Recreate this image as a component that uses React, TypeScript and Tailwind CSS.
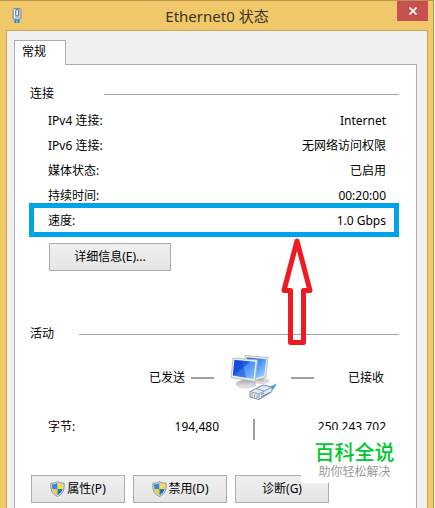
import type { ReactNode } from 'react';

const connectionRows = [
  { label: 'IPv4 连接:', value: 'Internet' },
  { label: 'IPv6 连接:', value: '无网络访问权限' },
  { label: '媒体状态:', value: '已启用' },
  { label: '持续时间:', value: '00:20:00' }
];

const actions = [
  { label: '属性(P)', shield: true },
  { label: '禁用(D)', shield: true },
  { label: '诊断(G)', shield: false }
];

function AdapterIcon() {
  return (
    <svg width="10" height="17" viewBox="0 0 10 17" aria-hidden="true">
      <path d="M2.500 11h5v5h-5z" fill="#1f86c4" />
      <path d="M4.500 11h1v5h-1z" fill="#a8e4fa" />
      <path d="M2 1.500h6l1 1V11l-1 1.500H2L1 11V2.500z" fill="#b9c6da" stroke="#7d8ba5" />
      <path d="M2 2.500h1V11H2z" fill="#eef3fa" />
      <path d="M3.800 2.800h2.700v6H3.800z" fill="#f3f6fa" stroke="#65769a" />
    </svg>
  );
}

function ShieldIcon() {
  return (
    <svg width="15" height="16" viewBox="0 0 15 16" aria-hidden="true">
      <defs>
        <clipPath id="shield">
          <path d="M7.500 2C6 3.200 4 3.500 2.200 3.300 1.800 8 3 12 7.500 14c4.500-2 5.700-6 5.300-10.700C11 3.500 9 3.200 7.500 2z" />
        </clipPath>
      </defs>
      <path
        d="M7.500.5C5.600 2 3.300 2.400 1 2 .3 8 1.500 13 7.500 15.500 13.500 13 14.700 8 14 2 11.700 2.400 9.400 2 7.500.5z"
        fill="#d5d8dc"
        stroke="#8f9499"
      />
      <g clipPath="url(#shield)">
        <path d="M0 0h7.500v8H0z" fill="#2a8ce0" />
        <path d="M7.500 0H15v8H7.500z" fill="#fbdc3c" />
        <path d="M0 8h7.500v8H0z" fill="#f9cf22" />
        <path d="M7.500 8H15v8H7.500z" fill="#1f76d0" />
      </g>
    </svg>
  );
}

function NetworkIcon() {
  return (
    <svg width="48" height="46" viewBox="0 0 48 46" aria-hidden="true">
      <defs>
        <linearGradient id="screen" x1="0" y1="0" x2="1" y2="1">
          <stop offset="0" stopColor="#0c48d8" />
          <stop offset="0.4" stopColor="#1d63f2" />
          <stop offset="0.45" stopColor="#4a8efa" />
          <stop offset="1" stopColor="#8cc6ff" />
        </linearGradient>
        <linearGradient id="backScreen" x1="0" y1="0" x2="1" y2="1">
          <stop offset="0" stopColor="#1459e6" />
          <stop offset="0.5" stopColor="#4a97fb" />
          <stop offset="1" stopColor="#b5e0ff" />
        </linearGradient>
        <linearGradient id="stand" x1="0" y1="0" x2="0" y2="1">
          <stop offset="0" stopColor="#a9abae" />
          <stop offset="1" stopColor="#efefef" />
        </linearGradient>
      </defs>
      <ellipse cx="31" cy="26" rx="8.500" ry="3" fill="#d6d7d8" />
      <path d="M27 21h6l1 5h-7z" fill="#b5b6b8" />
      <path d="M15 .5 38 2.500l-2.200 20L26 25l-11-5z" fill="#e8e8e5" stroke="#b2b4b1" strokeWidth="0.8" />
      <path d="M16.800 2.500 36.200 4.200l-1.900 16.500L26 23l-9-4z" fill="url(#backScreen)" />
      <path d="M12 23h9l1 6h-9z" fill="url(#stand)" />
      <ellipse cx="16" cy="29" rx="10" ry="4" fill="url(#stand)" stroke="#c0c1c2" strokeWidth="0.6" />
      <path d="M3 3 27.500 5l-2.500 21.500L1 22.500z" fill="#eeeeea" stroke="#b0b2b0" strokeWidth="0.8" />
      <path d="M4.500 5 25.500 6.800l-2 17.200L2.800 20.500z" fill="url(#screen)" />
      <path d="M4.500 5 12 5.600l4 17.100L2.800 20.500z" fill="#0a3cc4" opacity="0.4" />
      <path d="m36 33 11-4.500-3 5-7 4z" fill="#38a6c9" />
      <path d="m36 33 11-4.500-5 3-5 3z" fill="#8ddcf0" />
      <path d="m20 36.500 13-6.500 9 2v4.500L29 44.500 20 42z" fill="#dde8f3" stroke="#6a80a6" strokeWidth="0.9" />
      <path d="m20 36.500 9 2.500L42 32M29 39v5.500M26 33.500l8 2.500" fill="none" stroke="#8096b8" strokeWidth="0.9" />
      <path d="M22 38.500v3M24.500 39.200v3M27 40v3" stroke="#b9ac4a" />
      <path d="m31 42 9-4.500M31 39.500l3-1.500" stroke="#5d7298" strokeWidth="0.9" />
    </svg>
  );
}

function PushButton({ className, children }: { className: string; children: ReactNode }) {
  return (
    <button
      type="button"
      className={`flex h-7 items-center justify-center border border-[#acacac] bg-linear-to-b from-[#f0f0f0] to-[#e5e5e5] ${className}`}
    >
      {children}
    </button>
  );
}

function GroupHeading({ title, gap }: { title: string; gap: string }) {
  return (
    <div className={`flex items-center pl-px ${gap}`}>
      <h2>{title}</h2>
      <div className="h-px flex-1 bg-[#a0a0a0]" />
    </div>
  );
}

export default function App() {
  return (
    <div className="flex min-h-screen bg-[#f4f4f2] pr-px font-['Noto_Sans','Noto_Sans_CJK_SC',sans-serif] text-xs leading-4 text-black">
      <div className="flex flex-1 flex-col border-t border-r border-[#b8964c] bg-[#f0c869] pr-[5px] pl-1.5">
        <header className="relative flex h-[29px] items-center justify-center">
          <div className="absolute top-1.5 left-1.5">
            <AdapterIcon />
          </div>
          <h1 className="text-[15px] leading-5 text-[#3a3222]">Ethernet0 状态</h1>
          <button
            type="button"
            aria-label="关闭"
            className="absolute top-0 right-0 flex h-5 w-[31px] items-center justify-center bg-[#c75050]"
          >
            <svg width="8" height="8" viewBox="0 0 8 8" aria-hidden="true">
              <path d="m.5.5 7 7m0-7-7 7" stroke="#fff" strokeWidth="1.700" />
            </svg>
          </button>
        </header>

        <main className="flex flex-1 flex-col border-x border-t border-[#c9a556] bg-[#f0f0f0] pt-[9px] pr-[10px] pl-[7px]">
          <div role="tablist" className="flex">
            <button
              type="button"
              role="tab"
              aria-selected="true"
              className="relative z-10 -mb-px h-[25px] w-[52px] border-x border-t border-[#acacac] bg-white pr-3 pb-0.5"
            >
              常规
            </button>
          </div>

          <div role="tabpanel" className="flex-1 border-x border-t border-[#acacac] bg-white pt-[21px] pr-[17px] pl-3.5">
            <section className="relative">
              <GroupHeading title="连接" gap="gap-[50px]" />
              <dl className="mt-[11px]">
                <div className="flex flex-col gap-[9px] pr-[13px] pl-[19px]">
                  {connectionRows.map((row) => (
                    <div key={row.label} className="flex justify-between">
                      <dt>{row.label}</dt>
                      <dd>{row.value}</dd>
                    </div>
                  ))}
                </div>
                <div className="-mt-px flex h-[34px] items-center justify-between border-5 border-[#00a2e8] pt-0.5 pr-2 pl-3.5">
                  <dt>速度:</dt>
                  <dd>1.0 Gbps</dd>
                </div>
              </dl>
              <PushButton className="mt-1.5 ml-5 w-[122px]">详细信息(E)...</PushButton>

              {/* red marker pointing at the speed row */}
              <svg
                className="absolute top-[152px] right-[86px] z-10"
                width="32"
                height="108"
                viewBox="0 0 32 108"
                aria-hidden="true"
              >
                <path
                  d="M16 3 3 52.500h6.500v52h13v-52H29z"
                  fill="none"
                  stroke="#ed1c24"
                  strokeWidth="5"
                  strokeLinejoin="round"
                />
              </svg>
            </section>

            <section className="mt-[55px]">
              <GroupHeading title="活动" gap="gap-[25px]" />
              <div className="mt-[13px] grid grid-cols-[1fr_70px_97px] items-center pr-[13px]">
                <div className="flex items-center justify-end gap-1.5 pr-[5px]">
                  <span>已发送</span>
                  <div className="h-0.5 w-[23px] bg-[#a0a0a0]" />
                </div>
                <div className="flex justify-center">
                  <NetworkIcon />
                </div>
                <div className="flex items-center justify-between pr-0.5 pl-0.5">
                  <div className="h-0.5 w-[23px] bg-[#a0a0a0]" />
                  <span>已接收</span>
                </div>
              </div>
              <div className="mt-[18px] grid grid-cols-[1fr_70px_97px] items-start pr-[13px]">
                <div className="flex justify-between pl-[19px]">
                  <span>字节:</span>
                  <span>194,480</span>
                </div>
                <div className="flex justify-center">
                  <div className="h-[21px] w-0.5 bg-[#a0a0a0]" />
                </div>
                <span className="text-right">250,243,702</span>
              </div>
            </section>

            <div className="relative mt-[35px] flex gap-2 pl-0.5">
              {actions.map((action) => (
                <PushButton key={action.label} className="w-[94px] gap-0.5">
                  {action.shield && <ShieldIcon />}
                  {action.label}
                </PushButton>
              ))}
              <div className="absolute -top-[45px] -right-[9px] flex h-[53px] w-[107px] flex-col items-center bg-white pt-2.5 font-['Noto_Sans_CJK_SC',sans-serif]">
                <strong className="text-xl leading-6 font-medium text-[#00c832]">百科全说</strong>
                <span className="leading-3.5 text-[#999999]">助你轻松解决</span>
              </div>
            </div>
          </div>
        </main>
      </div>
    </div>
  );
}
